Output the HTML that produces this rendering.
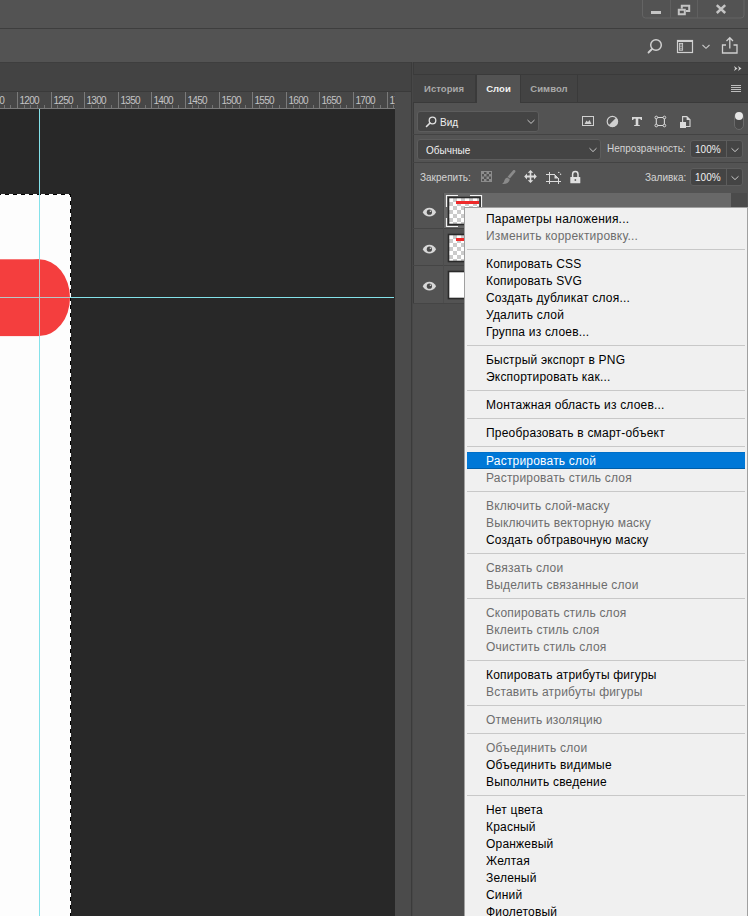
<!DOCTYPE html>
<html><head><meta charset="utf-8">
<style>
*{margin:0;padding:0;box-sizing:border-box}
html,body{width:748px;height:916px;overflow:hidden;background:#535353;font-family:"Liberation Sans",sans-serif}
.a{position:absolute}
#title{left:0;top:0;width:748px;height:28px;background:#535353}
#l28{left:0;top:28px;width:748px;height:1px;background:#3e3e3e}
#opt{left:0;top:29px;width:748px;height:33px;background:#535353}
#tabbar{left:0;top:62px;width:412px;height:30px;background:#434343;border-top:1px solid #3e3e3e;border-bottom:1px solid #3a3a3a}
#ruler{left:0;top:92px;width:395px;height:17px;background:#474747;border-bottom:1px solid #7a7a7a}
#canvas{left:0;top:109px;width:395px;height:807px;background:#282828;overflow:hidden}
#strip{left:395px;top:92px;width:17px;height:824px;background:#4b4b4b}
#vsep{left:411px;top:62px;width:3px;height:854px;background:#474747;border-left:1px solid #3b3b3b;border-right:1px solid #3b3b3b}
#panel{left:413px;top:62px;width:335px;height:854px;background:#535353}
#phead{left:413px;top:62px;width:335px;height:13px;background:#434343;border-top:1px solid #3e3e3e;border-bottom:1px solid #3a3a3a}
.tab{position:absolute;top:75px;height:28px;background:#434343;color:#a9a9a9;font-size:9.5px;font-weight:bold;letter-spacing:0.05px;line-height:27px;text-align:center;border-right:1px solid #3a3a3a;border-bottom:1px solid #3a3a3a}
.tab.act{background:#535353;color:#f2f2f2;border-bottom:none}
.pt{position:absolute;font-size:11px;color:#d4d4d4;white-space:nowrap;line-height:12px;transform:scaleX(0.91);transform-origin:0 0}
.dd{position:absolute;background:#444;border:1px solid #5d5d5d;border-radius:3px}
.rowsep{position:absolute;left:413px;width:335px;height:1px;background:#434343}
.layer{position:absolute;left:413px;width:335px;height:37px;background:#535353;border-bottom:1px solid #454545}
.menu{left:464px;top:207px;width:284px;height:720px;background:#f0f0f0;border:1px solid #a0a0a0;font-size:12px;letter-spacing:0.2px;color:#000}
.mi{position:absolute;left:21px;height:17px;line-height:17px;white-space:nowrap}
.dis{color:#6d6d6d}
.sep{position:absolute;left:2px;right:2px;height:1px;background:#c8c8c8}
.hl{position:absolute;left:2px;right:2px;height:17px;background:#0078d7;border-top:1px solid #006fc8;border-bottom:1px solid #005ea8}
.sel{color:#fff}
</style></head><body>
<div class="a" id="title"></div>
<div class="a" id="l28"></div>
<div class="a" id="opt"></div>
<div class="a" id="tabbar"></div>
<div class="a" id="ruler"></div>
<svg class="a" style="left:0;top:0" width="395" height="109" font-family="Liberation Sans" font-size="10" fill="#c4c4c4" letter-spacing="-0.7">
<rect x="4" y="105" width="1" height="3" fill="#737373"/>
<rect x="10" y="105" width="1" height="3" fill="#737373"/>
<text x="-14.5" y="103.6">1150</text>
<rect x="17" y="92" width="1" height="16" fill="#7a7a7a"/>
<rect x="24" y="105" width="1" height="3" fill="#737373"/>
<rect x="30" y="105" width="1" height="3" fill="#737373"/>
<rect x="37" y="105" width="1" height="3" fill="#737373"/>
<rect x="44" y="105" width="1" height="3" fill="#737373"/>
<text x="19.5" y="103.6">1200</text>
<rect x="51" y="92" width="1" height="16" fill="#7a7a7a"/>
<rect x="57" y="105" width="1" height="3" fill="#737373"/>
<rect x="64" y="105" width="1" height="3" fill="#737373"/>
<rect x="71" y="105" width="1" height="3" fill="#737373"/>
<rect x="77" y="105" width="1" height="3" fill="#737373"/>
<text x="53.5" y="103.6">1250</text>
<rect x="84" y="92" width="1" height="16" fill="#7a7a7a"/>
<rect x="91" y="105" width="1" height="3" fill="#737373"/>
<rect x="98" y="105" width="1" height="3" fill="#737373"/>
<rect x="104" y="105" width="1" height="3" fill="#737373"/>
<rect x="111" y="105" width="1" height="3" fill="#737373"/>
<text x="86.5" y="103.6">1300</text>
<rect x="118" y="92" width="1" height="16" fill="#7a7a7a"/>
<rect x="125" y="105" width="1" height="3" fill="#737373"/>
<rect x="131" y="105" width="1" height="3" fill="#737373"/>
<rect x="138" y="105" width="1" height="3" fill="#737373"/>
<rect x="145" y="105" width="1" height="3" fill="#737373"/>
<text x="120.5" y="103.6">1350</text>
<rect x="151" y="92" width="1" height="16" fill="#7a7a7a"/>
<rect x="158" y="105" width="1" height="3" fill="#737373"/>
<rect x="165" y="105" width="1" height="3" fill="#737373"/>
<rect x="172" y="105" width="1" height="3" fill="#737373"/>
<rect x="178" y="105" width="1" height="3" fill="#737373"/>
<text x="153.5" y="103.6">1400</text>
<rect x="185" y="92" width="1" height="16" fill="#7a7a7a"/>
<rect x="192" y="105" width="1" height="3" fill="#737373"/>
<rect x="198" y="105" width="1" height="3" fill="#737373"/>
<rect x="205" y="105" width="1" height="3" fill="#737373"/>
<rect x="212" y="105" width="1" height="3" fill="#737373"/>
<text x="187.5" y="103.6">1450</text>
<rect x="219" y="92" width="1" height="16" fill="#7a7a7a"/>
<rect x="225" y="105" width="1" height="3" fill="#737373"/>
<rect x="232" y="105" width="1" height="3" fill="#737373"/>
<rect x="239" y="105" width="1" height="3" fill="#737373"/>
<rect x="245" y="105" width="1" height="3" fill="#737373"/>
<text x="221.5" y="103.6">1500</text>
<rect x="252" y="92" width="1" height="16" fill="#7a7a7a"/>
<rect x="259" y="105" width="1" height="3" fill="#737373"/>
<rect x="266" y="105" width="1" height="3" fill="#737373"/>
<rect x="272" y="105" width="1" height="3" fill="#737373"/>
<rect x="279" y="105" width="1" height="3" fill="#737373"/>
<text x="254.5" y="103.6">1550</text>
<rect x="286" y="92" width="1" height="16" fill="#7a7a7a"/>
<rect x="293" y="105" width="1" height="3" fill="#737373"/>
<rect x="299" y="105" width="1" height="3" fill="#737373"/>
<rect x="306" y="105" width="1" height="3" fill="#737373"/>
<rect x="313" y="105" width="1" height="3" fill="#737373"/>
<text x="288.5" y="103.6">1600</text>
<rect x="319" y="92" width="1" height="16" fill="#7a7a7a"/>
<rect x="326" y="105" width="1" height="3" fill="#737373"/>
<rect x="333" y="105" width="1" height="3" fill="#737373"/>
<rect x="340" y="105" width="1" height="3" fill="#737373"/>
<rect x="346" y="105" width="1" height="3" fill="#737373"/>
<text x="321.5" y="103.6">1650</text>
<rect x="353" y="92" width="1" height="16" fill="#7a7a7a"/>
<rect x="360" y="105" width="1" height="3" fill="#737373"/>
<rect x="366" y="105" width="1" height="3" fill="#737373"/>
<rect x="373" y="105" width="1" height="3" fill="#737373"/>
<rect x="380" y="105" width="1" height="3" fill="#737373"/>
<text x="355.5" y="103.6">1700</text>
<rect x="387" y="92" width="1" height="16" fill="#7a7a7a"/>
<rect x="393" y="105" width="1" height="3" fill="#737373"/>
<text x="389.5" y="103.6">1750</text>
</svg>
<div class="a" id="canvas">
  <svg class="a" style="left:0;top:0" width="395" height="807" viewBox="0 109 395 807">
    <defs><clipPath id="doc"><rect x="0" y="194" width="71" height="800"/></clipPath></defs>
    <rect x="0" y="194" width="71" height="800" fill="#fdfdfd"/>
    <ellipse cx="39" cy="297.7" rx="31" ry="38.4" fill="#f43e3e"/>
    <rect x="0" y="259.3" width="39" height="76.8" fill="#f43e3e"/>
    <line x1="0" y1="194.5" x2="71" y2="194.5" stroke="#fff" stroke-width="1"/>
    <line x1="0" y1="194.5" x2="71" y2="194.5" stroke="#000" stroke-width="1" stroke-dasharray="4 4" stroke-dashoffset="3"/>
    <line x1="70.5" y1="194" x2="70.5" y2="916" stroke="#fff" stroke-width="1"/>
    <line x1="70.5" y1="194" x2="70.5" y2="916" stroke="#000" stroke-width="1" stroke-dasharray="4 4" stroke-dashoffset="1"/>
    <line x1="39.5" y1="109" x2="39.5" y2="916" stroke="#84e2ea" stroke-width="1"/>
    <line x1="0" y1="297.5" x2="394" y2="297.5" stroke="#84e2ea" stroke-width="1"/>
    <line x1="39.5" y1="259.5" x2="39.5" y2="336" stroke="#b4c6c6" stroke-width="1"/>
    <line x1="0" y1="297.5" x2="70" y2="297.5" stroke="#b4c6c6" stroke-width="1"/>
  </svg>
</div>
<div class="a" id="strip"></div>
<div class="a" id="panel"></div>
<div class="a" id="phead"></div>
<div class="a" id="vsep"></div>
<!-- tabs -->
<div class="tab" style="left:413px;width:63px">История</div>
<div class="tab act" style="left:476px;width:45px;border-left:1px solid #3a3a3a">Слои</div>
<div class="tab" style="left:521px;width:57px">Символ</div>
<div class="a" style="left:578px;top:75px;width:170px;height:28px;background:#434343;border-bottom:1px solid #3a3a3a"></div>
<!-- filter row -->
<div class="dd" style="left:417px;top:111px;width:122px;height:21px"></div>
<div class="pt" style="left:440px;top:116px;color:#f0f0f0">Вид</div>
<div class="rowsep" style="top:134px"></div>
<div class="dd" style="left:417px;top:139px;width:184px;height:21px"></div>
<div class="pt" style="left:426px;top:144px;color:#f0f0f0">Обычные</div>
<div class="pt" style="left:607px;top:142px">Непрозрачность:</div>
<div class="dd" style="left:690px;top:140px;width:53px;height:18px"></div>
<div class="a" style="left:726px;top:141px;width:1px;height:16px;background:#5d5d5d"></div>
<div class="pt" style="left:695px;top:143px;color:#f0f0f0">100%</div>
<div class="rowsep" style="top:162px"></div>
<div class="pt" style="left:420px;top:171px">Закрепить:</div>
<div class="pt" style="left:645px;top:171px">Заливка:</div>
<div class="dd" style="left:690px;top:168px;width:53px;height:18px"></div>
<div class="a" style="left:726px;top:169px;width:1px;height:16px;background:#5d5d5d"></div>
<div class="pt" style="left:695px;top:171px;color:#f0f0f0">100%</div>
<!-- layers -->
<div class="a" style="left:413px;top:228px;width:335px;height:1px;background:#454545"></div>
<div class="a" style="left:413px;top:265px;width:335px;height:1px;background:#454545"></div>
<div class="a" style="left:413px;top:303px;width:335px;height:1px;background:#454545"></div>
<div class="a" style="left:413px;top:304px;width:335px;height:612px;background:#4d4d4d"></div>
<div class="a" style="left:444px;top:193px;width:287px;height:35px;background:#686868"></div>
<div class="a" style="left:731px;top:193px;width:16px;height:35px;background:#4b4b4b"></div>
<div class="a" style="left:443px;top:193px;width:1px;height:110px;background:#4c4c4c"></div>
<svg class="a" style="left:0;top:0" width="748" height="916">
  <defs>
    <pattern id="chk" x="449" y="198" width="8" height="8" patternUnits="userSpaceOnUse">
      <rect width="8" height="8" fill="#fff"/><rect x="4" width="4" height="4" fill="#cbcbcb"/><rect y="4" width="4" height="4" fill="#cbcbcb"/>
    </pattern>
    <pattern id="chk2" x="449" y="235" width="8" height="8" patternUnits="userSpaceOnUse">
      <rect width="8" height="8" fill="#fff"/><rect x="4" width="4" height="4" fill="#cbcbcb"/><rect y="4" width="4" height="4" fill="#cbcbcb"/>
    </pattern>
    <g id="eye">
      <path d="M-6.7 0 C-3.5 -5.8 3.5 -5.8 6.7 0 C3.5 5.8 -3.5 5.8 -6.7 0 Z" fill="#d8d8d8"/>
      <circle cx="0" cy="0" r="2.6" fill="#4a4a4a"/>
      <circle cx="1" cy="-1" r="0.8" fill="#d8d8d8"/>
    </g>
  </defs>
  <!-- window controls -->
  <path d="M642.5 -1 V15 a3 3 0 0 0 3 3 H741 a3 3 0 0 0 3 -3 V-1" fill="none" stroke="#646464"/>
  <line x1="670.5" y1="0" x2="670.5" y2="18" stroke="#606060"/>
  <line x1="697.5" y1="0" x2="697.5" y2="18" stroke="#606060"/>
  <rect x="651" y="11" width="10" height="3" fill="#c4c4c4"/>
  <path d="M678.8 9.8 h6 v4.4 h-6 z M681.8 8.5 V5.8 h7.4 v5.2 h-3.2" fill="none" stroke="#c4c4c4" stroke-width="2"/>
  <path d="M716.8 5.2 L725.2 13 M725.2 5.2 L716.8 13" stroke="#c4c4c4" stroke-width="2.5"/>
  <!-- options bar icons -->
  <circle cx="656" cy="45" r="5.3" fill="none" stroke="#d0d0d0" stroke-width="1.5"/>
  <line x1="652" y1="49" x2="648.5" y2="52.5" stroke="#d0d0d0" stroke-width="1.8" stroke-linecap="round"/>
  <rect x="677.5" y="40.5" width="15" height="12" fill="none" stroke="#d0d0d0" stroke-width="1.2"/>
  <rect x="677" y="40" width="16" height="2" fill="#d0d0d0"/>
  <rect x="679.4" y="43.4" width="3.2" height="6.8" fill="none" stroke="#d0d0d0" stroke-width="0.9"/><circle cx="681" cy="44.9" r="0.7" fill="#d0d0d0"/><circle cx="681" cy="46.8" r="0.7" fill="#d0d0d0"/><circle cx="681" cy="48.7" r="0.7" fill="#d0d0d0"/>
  <path d="M702.5 45 L706 48.3 L709.5 45" fill="none" stroke="#c8c8c8" stroke-width="1.1"/>
  <path d="M726 45 H722.5 V53 H737 V45 H733.5" fill="none" stroke="#d0d0d0" stroke-width="1.3"/>
  <path d="M729.8 48.5 V38 M726.5 41 L729.8 37.7 L733 41" fill="none" stroke="#d0d0d0" stroke-width="1.3"/>
  <!-- panel header >> -->
  <path d="M734 66 L737.5 68.5 L734 71 L735 68.5 Z M738 66 L741.5 68.5 L738 71 L739 68.5 Z" fill="#d0d0d0"/>
  <!-- hamburger -->
  <path d="M731 85.5 H741 M731 87.5 H741 M731 89.5 H741 M731 91.5 H741" stroke="#bdbdbd" stroke-width="1"/>
  <!-- filter search icon -->
  <circle cx="432.5" cy="120.5" r="3.3" fill="none" stroke="#e0e0e0" stroke-width="1.3"/>
  <line x1="430" y1="123" x2="426.5" y2="126.5" stroke="#e0e0e0" stroke-width="1.6" stroke-linecap="round"/>
  <path d="M527.5 120 L531 123.4 L534.5 120" fill="none" stroke="#c8c8c8" stroke-width="1"/>
  <path d="M589.5 148.2 L593 151.6 L596.5 148.2" fill="none" stroke="#c8c8c8" stroke-width="1"/>
  <path d="M731.5 148.3 L735 151.6 L738.5 148.3" fill="none" stroke="#c8c8c8" stroke-width="1"/>
  <path d="M731.5 176.3 L735 179.6 L738.5 176.3" fill="none" stroke="#c8c8c8" stroke-width="1"/>
  <!-- filter icons -->
  <rect x="582.5" y="116.5" width="11" height="9" fill="none" stroke="#d0d0d0" stroke-width="1"/>
  <path d="M584.5 124 L586.5 120.5 L588 122 L589.5 120 L591.5 124 Z" fill="#d0d0d0"/>
  <circle cx="612.4" cy="121.5" r="5.2" fill="none" stroke="#d0d0d0" stroke-width="1.2"/>
  <path d="M616.1 117.8 A5.2 5.2 0 0 1 608.7 125.2 Z" fill="#d0d0d0"/>
  <path d="M632 117 H642 V120 H641 L640 118.8 H638.3 V125 H639.8 V126 H634.2 V125 H635.7 V118.8 H634 L633 120 H632 Z" fill="#d8d8d8"/>
  <path d="M656.3 117.5 H664.4 V125.5 H656.3 Z" fill="none" stroke="#d8d8d8" stroke-width="1.1"/>
  <circle cx="656.3" cy="117.5" r="1.35" fill="#535353" stroke="#d8d8d8" stroke-width="1"/>
  <circle cx="664.4" cy="117.5" r="1.35" fill="#535353" stroke="#d8d8d8" stroke-width="1"/>
  <circle cx="656.3" cy="125.5" r="1.35" fill="#535353" stroke="#d8d8d8" stroke-width="1"/>
  <circle cx="664.4" cy="125.5" r="1.35" fill="#535353" stroke="#d8d8d8" stroke-width="1"/>
  <path d="M682.6 122 V116.6 H686.8 L690 119.8 V126.5 H686" fill="none" stroke="#d8d8d8" stroke-width="1.1"/>
  <path d="M686.6 116.3 L690.3 120 H686.6 Z" fill="#d8d8d8"/>
  <rect x="680" y="122" width="6" height="6" fill="#dcdcdc"/>
  <!-- toggle -->
  <rect x="734.5" y="112.5" width="9" height="17" rx="4.5" fill="#484848" stroke="#6a6a6a" stroke-width="1"/>
  <circle cx="739" cy="116" r="4" fill="#e6e6e6"/>
  <!-- lock icons -->
  <g fill="#8c8c8c">
    <rect x="481.5" y="171.5" width="10" height="10" fill="none" stroke="#8c8c8c" stroke-width="1"/>
    <rect x="481.50" y="171.50" width="2.5" height="2.5"/><rect x="481.50" y="176.50" width="2.5" height="2.5"/><rect x="484.00" y="174.00" width="2.5" height="2.5"/><rect x="484.00" y="179.00" width="2.5" height="2.5"/><rect x="486.50" y="171.50" width="2.5" height="2.5"/><rect x="486.50" y="176.50" width="2.5" height="2.5"/><rect x="489.00" y="174.00" width="2.5" height="2.5"/><rect x="489.00" y="179.00" width="2.5" height="2.5"/>
  </g>
  <path d="M513.2 170.2 C514.6 169.4 516 170.6 515.3 172 L509.8 178.6 L507.6 176.8 Z" fill="#8a8a8a"/>
  <path d="M507.4 177.4 C505.6 177.8 504.6 179.4 504.2 181 C503.8 182.4 503 183.3 502 183.9 C505.8 184.4 509 182.8 509.8 179.4 Z" fill="#8a8a8a"/>
  <path d="M530.5 170 L533.3 172.8 H531.3 V175.5 H534 V173.5 L536.8 176.5 L534 179.5 V177.5 H531.3 V180.2 H533.3 L530.5 183 L527.7 180.2 H529.7 V177.5 H527 V179.5 L524.2 176.5 L527 173.5 V175.5 H529.7 V172.8 H527.7 Z" fill="#dcdcdc"/>
  <path d="M549.5 172 V184 M546 181.5 H561 M546 174.5 H555 M558.5 178 V184 M554.5 174.5 L558.5 178.5" fill="none" stroke="#dcdcdc" stroke-width="1"/>
  <path d="M554.5 174.5 L558.5 178.5 H554.5 Z" fill="#dcdcdc"/>
  <circle cx="558.8" cy="172.4" r="0.7" fill="#dcdcdc"/><circle cx="560.6" cy="174.3" r="0.7" fill="#dcdcdc"/>
  <path d="M572.6 177 V174.3 A2.7 2.7 0 0 1 578 174.3 V177" fill="none" stroke="#e0e0e0" stroke-width="1.5"/>
  <rect x="570.3" y="177" width="10" height="6.3" rx="0.6" fill="#e0e0e0"/>
  <rect x="574.6" y="179.2" width="1.5" height="1.6" fill="#535353"/>
  <!-- eyes -->
  <use href="#eye" x="429.4" y="212.2"/>
  <use href="#eye" x="429.4" y="249.2"/>
  <use href="#eye" x="429.4" y="286.2"/>
  <!-- thumbnails -->
  <path d="M446.5 207 V195.5 H458 M470 195.5 H481.5 V207 M481.5 218 V226.5 H470 M458 226.5 H446.5 V218" fill="none" stroke="#f4f4f4" stroke-width="1.2"/>
  <rect x="448.5" y="197.5" width="31.5" height="27" fill="url(#chk)" stroke="#2a2a2a" stroke-width="1.6"/>
  <rect x="456" y="201" width="23" height="3" fill="#ee2a2a"/>
  <rect x="448.5" y="234.5" width="31.5" height="27" fill="url(#chk2)" stroke="#2a2a2a" stroke-width="1.6"/>
  <rect x="456" y="238" width="23" height="3" fill="#ee2a2a"/>
  <rect x="448.5" y="271.5" width="31.5" height="27" fill="#fff" stroke="#2a2a2a" stroke-width="1.6"/>
</svg>
<div class="a menu" id="menu">
<div class="mi" style="top:3px">Параметры наложения...</div>
<div class="mi dis" style="top:20px">Изменить корректировку...</div>
<div class="sep" style="top:41px"></div>
<div class="mi" style="top:48px">Копировать CSS</div>
<div class="mi" style="top:65px">Копировать SVG</div>
<div class="mi" style="top:82px">Создать дубликат слоя...</div>
<div class="mi" style="top:99px">Удалить слой</div>
<div class="mi" style="top:116px">Группа из слоев...</div>
<div class="sep" style="top:137px"></div>
<div class="mi" style="top:144px">Быстрый экспорт в PNG</div>
<div class="mi" style="top:161px">Экспортировать как...</div>
<div class="sep" style="top:182px"></div>
<div class="mi" style="top:189px">Монтажная область из слоев...</div>
<div class="sep" style="top:210px"></div>
<div class="mi" style="top:217px">Преобразовать в смарт-объект</div>
<div class="sep" style="top:238px"></div>
<div class="hl" style="top:244px"></div>
<div class="mi sel" style="top:245px">Растрировать слой</div>
<div class="mi dis" style="top:262px">Растрировать стиль слоя</div>
<div class="sep" style="top:283px"></div>
<div class="mi dis" style="top:290px">Включить слой-маску</div>
<div class="mi dis" style="top:307px">Выключить векторную маску</div>
<div class="mi" style="top:324px">Создать обтравочную маску</div>
<div class="sep" style="top:345px"></div>
<div class="mi dis" style="top:352px">Связать слои</div>
<div class="mi dis" style="top:369px">Выделить связанные слои</div>
<div class="sep" style="top:390px"></div>
<div class="mi dis" style="top:397px">Скопировать стиль слоя</div>
<div class="mi dis" style="top:414px">Вклеить стиль слоя</div>
<div class="mi dis" style="top:431px">Очистить стиль слоя</div>
<div class="sep" style="top:452px"></div>
<div class="mi" style="top:459px">Копировать атрибуты фигуры</div>
<div class="mi dis" style="top:476px">Вставить атрибуты фигуры</div>
<div class="sep" style="top:497px"></div>
<div class="mi dis" style="top:504px">Отменить изоляцию</div>
<div class="sep" style="top:525px"></div>
<div class="mi dis" style="top:532px">Объединить слои</div>
<div class="mi" style="top:549px">Объединить видимые</div>
<div class="mi" style="top:566px">Выполнить сведение</div>
<div class="sep" style="top:587px"></div>
<div class="mi" style="top:594px">Нет цвета</div>
<div class="mi" style="top:611px">Красный</div>
<div class="mi" style="top:628px">Оранжевый</div>
<div class="mi" style="top:645px">Желтая</div>
<div class="mi" style="top:662px">Зеленый</div>
<div class="mi" style="top:679px">Синий</div>
<div class="mi" style="top:696px">Фиолетовый</div>
<div class="mi" style="top:713px">Серый</div>

</div>
</body></html>
